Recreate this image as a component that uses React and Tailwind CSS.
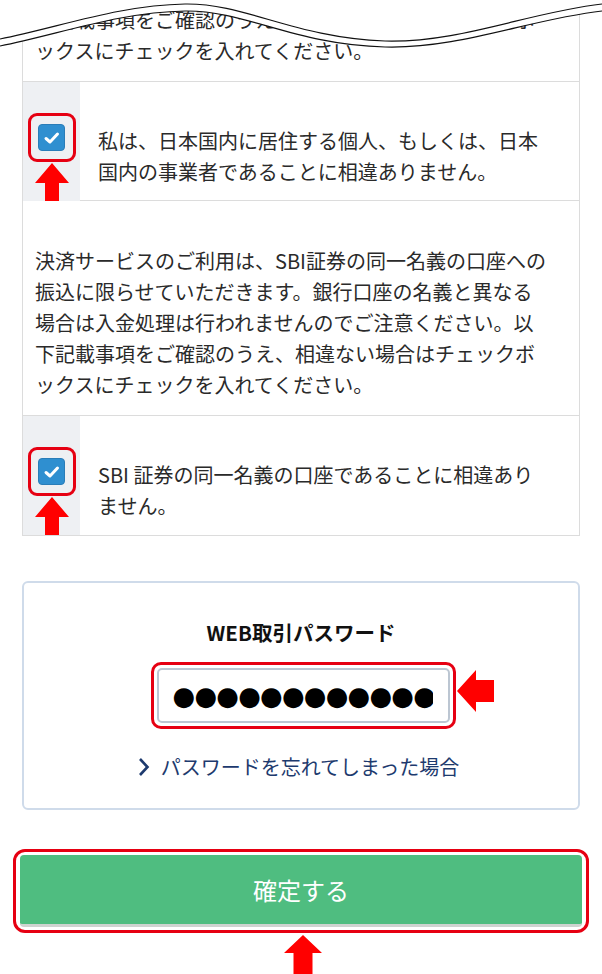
import React from 'react';

const UpArrow = ({ w = 34, h = 38, head = 20, shaft = 14 }) => (
  <svg width={w} height={h} viewBox={`0 0 ${w} ${h}`} className="block">
    <path
      d={`M${w / 2} 0 L${w} ${head} L${(w + shaft) / 2} ${head} L${(w + shaft) / 2} ${h} L${(w - shaft) / 2} ${h} L${(w - shaft) / 2} ${head} L0 ${head} Z`}
      fill="#ff0000"
    />
  </svg>
);

const LeftArrow = () => (
  <svg width="37" height="42" viewBox="0 0 37 42" className="block">
    <path d="M0 21 L19 0 L19 10 L37 10 L37 32 L19 32 L19 42 Z" fill="#ff0000" />
  </svg>
);

const CheckCell = () => (
  <div className="w-[57px] shrink-0 bg-[#eef0f3] flex flex-col items-center pt-[31px]">
    <div className="w-[48px] h-[49px] rounded-[9px] border-[3px] border-[#e60012] flex items-center justify-center">
      <div className="w-[27px] h-[27px] rounded-[4px] bg-[#2f8fd0] border border-[#2a7db8] flex items-center justify-center">
        <svg width="20" height="20" viewBox="0 0 20 20">
          <path d="M4 10.5 L8 14 L15.5 6" fill="none" stroke="#fff" strokeWidth="3" strokeLinecap="round" strokeLinejoin="round" />
        </svg>
      </div>
    </div>
    <div className="mt-[1px]">
      <UpArrow />
    </div>
  </div>
);

const upper = 'M0 39 C60 27 120 5 185 4 C245 3 295 38 385 41 C460 43 530 12 602 4';
const lower = 'M0 46 C60 34 120 12 185 11 C245 10 295 45 385 47 C460 49 530 19 602 11';

const Wave = () => (
  <svg width="602" height="60" viewBox="0 0 602 60" className="absolute left-0 top-0 pointer-events-none">
    <path d={`${lower} L602 0 L0 0 Z`} fill="#fff" />
    <path d={upper} fill="none" stroke="#111" strokeWidth="1.2" />
    <path d={lower} fill="none" stroke="#111" strokeWidth="1.2" />
  </svg>
);

export default function App() {
  return (
    <div className="relative w-[602px] h-[974px] overflow-hidden bg-white text-[#2a2a2a] font-['Noto_Sans_CJK_JP',sans-serif]">
      {/* agreement card */}
      <div className="mx-[22px] border-x border-b border-[#dcdcdc]">
        <div className="px-3 pt-[4px] pb-[15px] text-[20px] leading-[31px] whitespace-nowrap">
          下記載事項をご確認のうえ、相違ない場合はチェックボ
          <br />
          ックスにチェックを入れてください。
        </div>

        <div className="flex border-t border-[#dcdcdc]">
          <CheckCell />
          <div className="flex-1 pl-[18px] pr-3 pt-[43px] border-b border-[#dcdcdc] text-[20px] leading-[31px] whitespace-nowrap">
            私は、日本国内に居住する個人、もしくは、日本
            <br />
            国内の事業者であることに相違ありません。
          </div>
        </div>

        <div className="px-3 pt-[44px] pb-[15px] text-[20px] leading-[31px] whitespace-nowrap">
          決済サービスのご利用は、SBI証券の同一名義の口座への
          <br />
          振込に限らせていただきます。銀行口座の名義と異なる
          <br />
          場合は入金処理は行われませんのでご注意ください。以
          <br />
          下記載事項をご確認のうえ、相違ない場合はチェックボ
          <br />
          ックスにチェックを入れてください。
        </div>

        <div className="flex border-t border-[#dcdcdc]">
          <CheckCell />
          <div className="flex-1 pl-[18px] pr-3 pt-[43px] text-[20px] leading-[31px] whitespace-nowrap">
            SBI 証券の同一名義の口座であることに相違あり
            <br />
            ません。
          </div>
        </div>
      </div>

      {/* password panel */}
      <div className="mx-[22px] mt-[45px] h-[229px] border-2 border-[#cfdbea] rounded-[6px] flex flex-col items-center pt-[35px]">
        <div className="text-[20.5px] leading-[28px] font-bold text-[#111]">WEB取引パスワード</div>
        <div className="relative mt-[16px] ml-[4px]">
          <div className="w-[305px] h-[67px] rounded-[10px] border-[3px] border-[#e60012] p-[3px]">
            <div className="h-full rounded-[5px] border-2 border-[#bcc6d2] bg-white flex items-center pl-[14px]">
              <div className="w-[260px] overflow-hidden whitespace-nowrap text-[26px] leading-[32px] tracking-[-0.8px] text-black font-['DejaVu_Sans',sans-serif]">
                ●●●●●●●●●●●●●
              </div>
            </div>
          </div>
          <div className="absolute left-[306px] top-[8px]">
            <LeftArrow />
          </div>
        </div>
        <div className="mt-[24px] flex items-center text-[20px] leading-[28px] text-[#1d3a6e] -ml-[6px]">
          <svg width="13" height="20" viewBox="0 0 13 20" className="mr-[11px]">
            <path d="M3 2 L10.5 10 L3 18" fill="none" stroke="#1d3a6e" strokeWidth="2.6" />
          </svg>
          パスワードを忘れてしまった場合
        </div>
      </div>

      {/* submit */}
      <div className="mx-[13px] mt-[39px] rounded-[12px] border-[3px] border-[#e60012] px-[4px] py-[3px]">
        <div className="h-[72px] rounded-[4px] bg-[#4fbd80] border-b-[3px] border-[#cfd3d0] flex items-center justify-center text-white text-[24px]">
          確定する
        </div>
      </div>
      <div className="flex justify-center pl-[3px] mt-[2px]">
        <UpArrow w={38} h={40} head={18} shaft={19} />
      </div>

      <Wave />
    </div>
  );
}
